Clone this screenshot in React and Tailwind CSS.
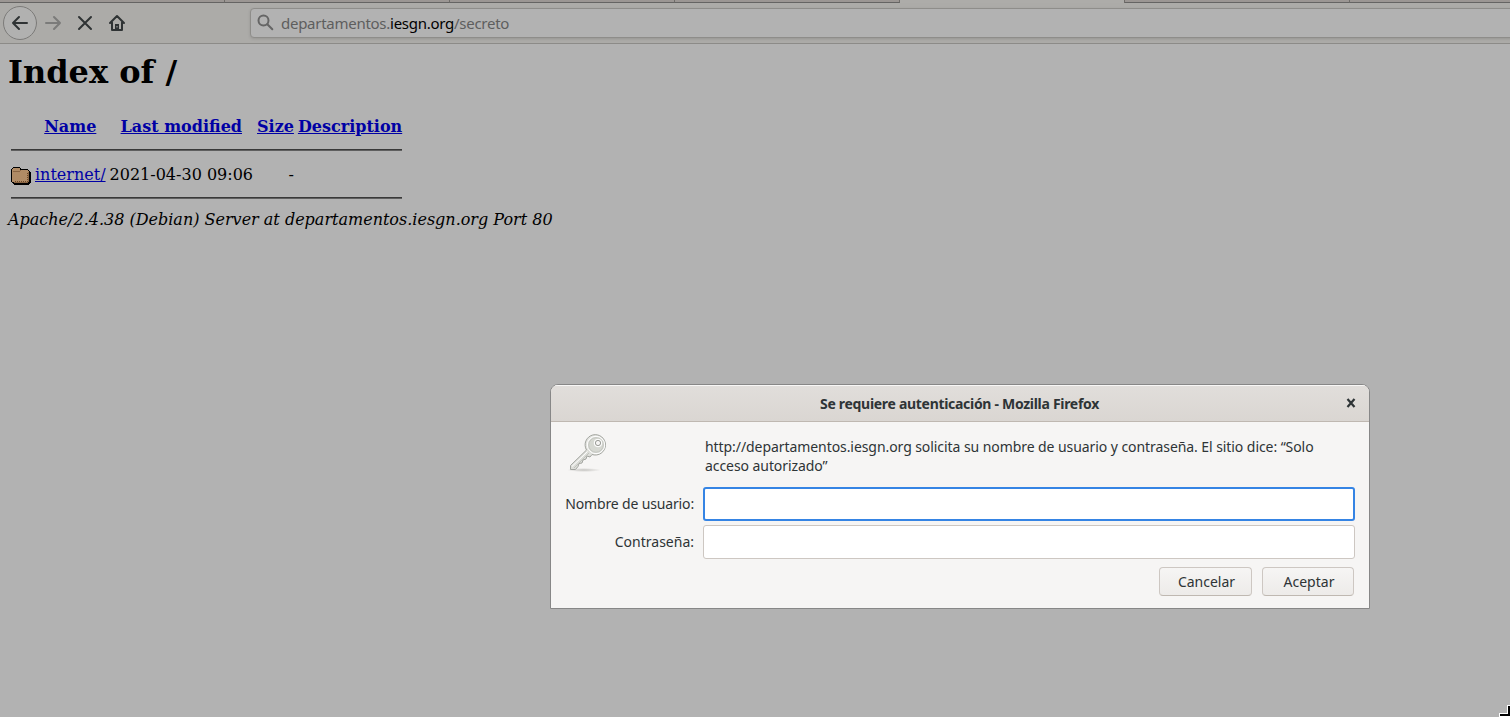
const ui = "font-['Noto_Sans',sans-serif]";

function Tab({ active }) {
  return active ? (
    <div className="h-[3px] w-[225px] shrink-0 border-r border-r-[#6f6c69] bg-[#adaca9]" />
  ) : (
    <div className="h-[3px] w-[225px] shrink-0 border-r border-b border-r-[#6f6c69] border-b-[#656463] bg-[#9b9693]" />
  );
}

function Toolbar() {
  return (
    <header className="flex h-[44px] flex-col border-b border-[#8c8b88] bg-[#acaba8]">
      <div className="flex h-[3px] overflow-hidden">
        <Tab />
        <Tab />
        <Tab />
        <Tab />
        <Tab active />
        <Tab />
        <Tab />
      </div>
      <div className="flex h-10 items-center">
        <svg className="block h-10 w-[136px] shrink-0" viewBox="0 3 136 40" fill="none" stroke="#2f3334" strokeWidth="2" strokeLinecap="round" strokeLinejoin="round">
          <circle cx="20" cy="23" r="16.5" fill="#b1b1b0" stroke="#7c7b79" strokeWidth="1" />
          <path d="M27 23H13M19 17l-6 6l6 6" />
          <path d="M46 23h14M54 17l6 6l-6 6" stroke="#7b7b7a" />
          <path d="M79 17l12 12M91 17l-12 12" />
          <path d="M110 23l7-7l7 7M112 22.500v7.500h10v-7.500" />
          <path d="M115 30v-6h4v6z" fill="#2f3334" stroke="none" />
          <path d="M117 26v1.500" stroke="#acaba8" strokeWidth="1" strokeLinecap="butt" />
        </svg>
        <div className="mb-px -mr-2 ml-[114px] flex h-[30px] flex-1 items-center rounded-[4px] border border-[#8e8d8a] bg-[#b2b2b2] pl-[6px] shadow-[0_1px_3px_rgba(0,0,0,0.12)]">
          <svg className="mt-px size-[18px]" viewBox="0 0 18 18" fill="none" stroke="#656565" strokeWidth="2" strokeLinecap="round">
            <circle cx="6.500" cy="6.500" r="5" />
            <path d="M10.300 10.300l5 5" />
          </svg>
          <span className={`${ui} ml-[6px] text-[15px] leading-5 tracking-[-0.27px] whitespace-pre text-[#5e5e5e]`}>
            departamentos.<span className="text-black">iesgn.org</span>/secreto
          </span>
        </div>
      </div>
    </header>
  );
}

function Rule() {
  return (
    <tr className="h-5">
      <td colSpan={5} className="px-px py-0">
        <div className="h-[2px] border-t border-t-[#393939] bg-[#5f5f5f]" />
      </td>
    </tr>
  );
}

function Folder() {
  return (
    <svg className="block h-[22px] w-5" viewBox="0 0 20 22" shapeRendering="crispEdges">
      <path d="M1 5h1V4h7v1h1v1h7v1h1v1h1v1h1v11h-1v1h-1v1H3v-1H2v-1H1v-1H0V6h1z" fill="#000" />
      <path d="M1 6h1V5h7v2h8v1h1v11h-1v1H3v-1H1z" fill="#b08b65" />
      <path d="M2 8h7V7h1v1H9v1H2zM17 9h1v10h-1v1H3v-1h14z" fill="#8a6543" />
      <path d="M4 18h1v1H4zM6 18h1v1H6zM8 18h1v1H8zM10 18h1v1h-1zM12 18h1v1h-1zM14 18h1v1h-1zM16 10h1v1h-1zM16 12h1v1h-1zM16 14h1v1h-1zM16 16h1v1h-1zM16 18h1v1h-1z" fill="#6b4828" />
    </svg>
  );
}

function Listing() {
  const link = "text-[#0000a5] underline";
  return (
    <main className="px-2 pt-[9.5px] font-['DejaVu_Serif',serif] text-[16px] leading-[19px] text-black">
      <h1 className="mb-[21.500px] text-[32px] leading-[37px] font-bold">Index of /</h1>
      <table className="border-separate border-spacing-[2px]">
        <tbody>
          <tr className="h-6">
            <th className="p-px"><div className="w-5" /></th>
            <th className="p-px"><a className={link}>Name</a></th>
            <th className="p-px"><a className={link}>Last modified</a></th>
            <th className="p-px"><a className={link}>Size</a></th>
            <th className="p-px"><a className={link}>Description</a></th>
          </tr>
          <Rule />
          <tr className="h-6">
            <td className="p-px"><Folder /></td>
            <td className="p-px"><a className={link}>internet/</a></td>
            <td className="p-px text-right whitespace-pre">2021-04-30 09:06</td>
            <td className="p-px text-right">-</td>
            <td className="p-px" />
          </tr>
          <Rule />
        </tbody>
      </table>
      <address className="italic">Apache/2.4.38 (Debian) Server at departamentos.iesgn.org Port 80</address>
    </main>
  );
}

function KeyIcon() {
  return (
    <svg className="mt-[2px] ml-[2px] block h-10 w-11" viewBox="0 0 44 40" fill="none">
      <defs>
        <linearGradient id="metal" x1="0" y1="0" x2="1" y2="1">
          <stop offset="0" stopColor="#f3f3f1" />
          <stop offset="0.500" stopColor="#dcddd8" />
          <stop offset="1" stopColor="#eeeeec" />
        </linearGradient>
        <radialGradient id="shade">
          <stop offset="0" stopColor="#c4c3c0" />
          <stop offset="1" stopColor="#f6f5f4" />
        </radialGradient>
      </defs>
      <ellipse cx="17" cy="37" rx="17" ry="2" fill="url(#shade)" />
      <path d="M19.500 17L3.500 32.500v4h5l2.500-3l1-3l3-.5l1-3l3-1l1-3l3 1l2-2.500a10.200 10.200 0 1 0-5.500-4.500z" fill="url(#metal)" stroke="#a2a49f" />
      <path d="M20.500 18.500L5 33.500" stroke="#fff" />
      <path d="M22 20L7 35" stroke="#c0c2bc" />
      <circle cx="29" cy="12" r="8.700" stroke="#fff" />
      <circle cx="29" cy="12" r="7.300" fill="#d6d8d2" stroke="#c3c5bf" />
      <circle cx="31" cy="10" r="3.800" fill="#eeeeec" stroke="#fff" />
      <circle cx="31" cy="10" r="2.600" fill="#f6f5f4" stroke="#9a9c97" />
    </svg>
  );
}

function Dialog() {
  return (
    <section className={`${ui} absolute top-[384px] left-[550px] flex h-[225px] w-[820px] flex-col overflow-hidden rounded-t-[8px] border border-[#878787] bg-[#f6f5f4] text-[14px] text-[#2e3436]`}>
      <div className="flex h-[37px] shrink-0 items-center border-b border-[#bfb8b1] bg-linear-to-b from-[#e1dedb] to-[#dad6d2] pr-[13px] pl-[22px] shadow-[inset_0_1px_#f8f7f6]">
        <h2 className="flex-1 text-center font-bold tracking-[-0.3px] whitespace-pre">Se requiere autenticación - Mozilla Firefox</h2>
        <svg className="size-[10px]" viewBox="0 0 10 10" stroke="#2e3436" strokeWidth="2.200">
          <path d="M1.500 1l7 8M8.500 1l-7 8" />
        </svg>
      </div>
      <div className="grid h-[54px] grid-cols-[129px_652px] gap-x-[9px] pt-[9px] pl-[14px]">
        <KeyIcon />
        <p className="ml-[2px] pt-[6px] leading-[19px] tracking-[-0.07px] whitespace-pre">
          {"http://departamentos.iesgn.org solicita su nombre de usuario y contraseña. El sitio dice: “Solo\nacceso autorizado”"}
        </p>
      </div>
      <div className="mt-[11px] grid grid-cols-[129px_652px] items-center gap-x-[9px] gap-y-1 pl-[14px]">
        <label className="pb-[2px] text-right tracking-[-0.15px] whitespace-pre">Nombre de usuario:</label>
        <input className="h-[34px] rounded-[3px] border-2 border-[#3584e4] bg-white outline-none" />
        <label className="pb-[2px] text-right whitespace-pre">Contraseña:</label>
        <input className="h-[34px] rounded-[3px] border border-[#cdc7c2] bg-white outline-none" />
      </div>
      <div className="mt-2 flex justify-end gap-[10px] pr-[15px]">
        <button className="h-[29px] w-[93px] rounded-[4px] border border-[#cdc7c2] border-b-[#bfb8b1] bg-linear-to-b from-[#f6f5f4] to-[#edebe9] pl-[2px]">Cancelar</button>
        <button className="h-[29px] w-[92px] rounded-[4px] border border-[#cdc7c2] border-b-[#bfb8b1] bg-linear-to-b from-[#f6f5f4] to-[#edebe9] pl-[2px]">Aceptar</button>
      </div>
    </section>
  );
}

export default function App() {
  return (
    <div className="relative h-[717px] w-[1510px] overflow-hidden bg-[#b2b2b2]">
      <Toolbar />
      <Listing />
      <Dialog />
      <svg className="absolute right-0 bottom-0 h-3 w-[11px]" viewBox="0 0 11 12" shapeRendering="crispEdges">
        <path d="M0 8h8V0h3v12H0z" fill="#fff" />
        <path d="M1 9h8V1h2v10H1z" fill="#000" />
      </svg>
    </div>
  );
}
